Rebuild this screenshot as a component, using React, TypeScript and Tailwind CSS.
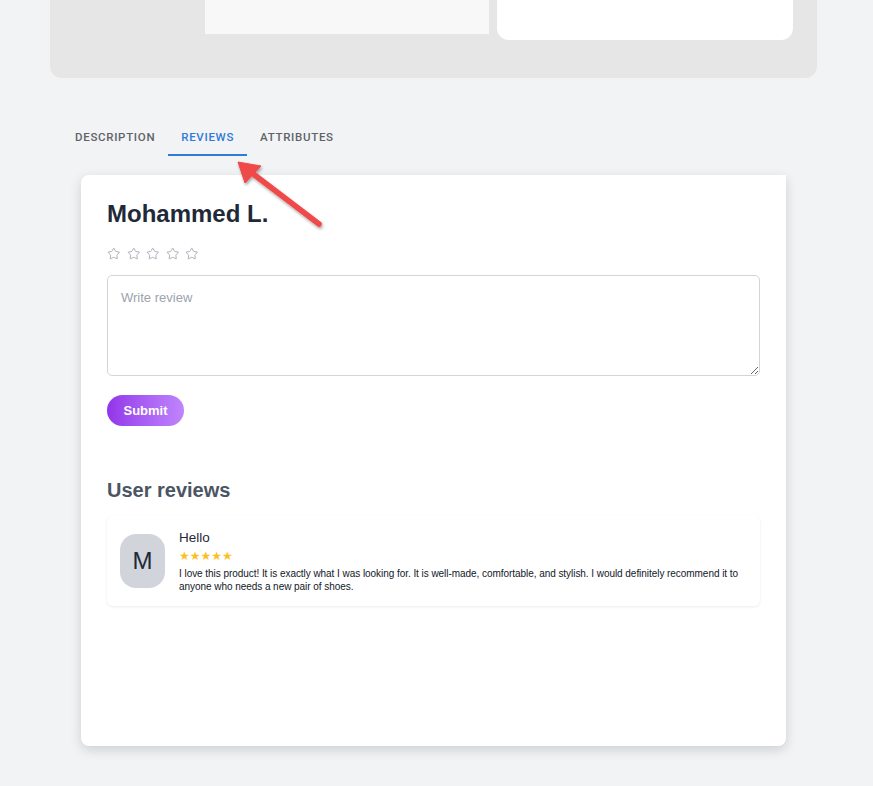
import { Star } from "lucide-react";

const reviewText =
  "I love this product! It is exactly what I was looking for. It is well-made, comfortable, and stylish. I would definitely recommend it to anyone who needs a new pair of shoes.";

function Tabs() {
  const tabs = ["Description", "Reviews", "Attributes"];
  return (
    <div className="flex pl-[12px] mt-[40px]">
      {tabs.map((t) => {
        const active = t === "Reviews";
        return (
          <div
            key={t}
            className={
              active
                ? "h-[38px] pt-[3px] px-[13px] flex items-center border-b-2 border-[#2f7bd6] text-[#2f7bd6] uppercase text-[11.5px] font-medium tracking-[0.06em]"
                : "h-[38px] pt-[3px] px-[13px] flex items-center border-b-2 border-transparent text-[#5f6368] uppercase text-[11.5px] font-medium tracking-[0.06em]"
            }
            style={{ fontFamily: "Roboto, sans-serif" }}
          >
            {t}
          </div>
        );
      })}
    </div>
  );
}

function ReviewItem() {
  return (
    <div className="mt-[11px] h-[91px] rounded-md bg-white shadow-[0_1px_3px_rgba(0,0,0,0.08)] flex items-start pt-[13px] pl-[13px] pr-[14px] gap-[14px]">
      <div className="mt-[6px] w-[45px] h-[54px] shrink-0 rounded-2xl bg-[#d1d5db] flex items-center justify-center text-[24px] text-[#1f2937]">
        M
      </div>
      <div className="flex-1">
        <div className="text-[13.5px] leading-[20px] text-[#1f2937]">Hello</div>
        <div
          className="mt-[2px] text-[12px] leading-[12px] text-[#fbbf24]"
          style={{ fontFamily: "'DejaVu Sans', sans-serif" }}
        >
          ★★★★★
        </div>
        <p className="mt-[6px] text-[10px] leading-[12.5px] tracking-[-0.05px] text-[#111827]">{reviewText}</p>
      </div>
    </div>
  );
}

export default function App() {
  return (
    <div
      className="relative min-h-screen w-full bg-[#f2f3f5] pb-[40px]"
      style={{ fontFamily: "'Liberation Sans', Arial, sans-serif" }}
    >
      <div className="ml-[50px] w-[767px]">
        {/* product panel, scrolled mostly out of view */}
        <div className="h-[78px] rounded-b-xl bg-[#e6e6e6] flex items-start pl-[155px] gap-2">
          <div className="w-[284px] h-[34px] bg-[#f8f8f8]" />
          <div className="w-[296px] h-[40px] bg-white rounded-b-xl" />
        </div>

        <Tabs />

        <div className="ml-[31px] mt-[19px] w-[705px] h-[571px] bg-white rounded-lg rounded-tr-none shadow-[0_4px_12px_rgba(0,0,0,0.15)] px-[26px] pt-[23px]">
          <h1 className="text-[24px] leading-8 font-bold text-[#1f2937]">Mohammed L.</h1>
          <div className="mt-[17px] h-[14px] flex items-center gap-[6px]">
            {[0, 1, 2, 3, 4].map((i) => (
              <Star key={i} className="w-[13.5px] h-[13.5px] text-[#9ca3af]" strokeWidth={1.5} />
            ))}
          </div>
          <textarea
            className="mt-[14px] block w-full h-[101px] rounded-[5px] border border-[#d1d5db] px-[13px] pt-[12px] text-[13px] text-[#374151] placeholder:text-[#9ca3af] outline-none"
            placeholder="Write review"
          />
          <button className="mt-[19px] h-[31px] w-[77px] rounded-full bg-gradient-to-r from-[#9333ea] to-[#c084fc] text-white text-[13px] font-bold">
            Submit
          </button>
          <h2 className="mt-[50px] text-[20px] leading-[28px] font-bold text-[#4b5563]">User reviews</h2>
          <ReviewItem />
        </div>
      </div>

      {/* annotation arrow */}
      <svg
        className="absolute left-0 top-0 pointer-events-none"
        width="873"
        height="786"
        viewBox="0 0 873 786"
      >
        <defs>
          <filter id="sh" x="-20%" y="-20%" width="140%" height="140%">
            <feDropShadow dx="1" dy="2" stdDeviation="1.5" floodColor="#000" floodOpacity="0.35" />
          </filter>
        </defs>
        <g filter="url(#sh)" fill="#f04848" stroke="#f04848">
          <line x1="319" y1="224" x2="252" y2="173" strokeWidth="5.5" strokeLinecap="round" />
          <polygon points="238,162 261,166 245,183" strokeWidth="1" strokeLinejoin="round" />
        </g>
      </svg>
    </div>
  );
}
